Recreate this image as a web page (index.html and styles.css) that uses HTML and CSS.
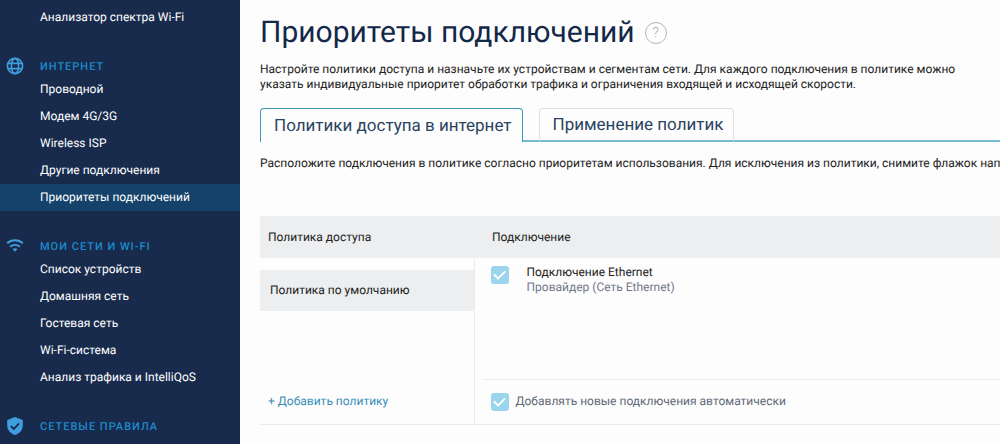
FILE: index.html
```html
<!DOCTYPE html>
<html lang="ru">
<head>
<meta charset="utf-8">
<title>Приоритеты подключений</title>
<link rel="stylesheet" href="styles.css">
</head>
<body>
<div class="app">
  <nav class="sidebar">
    <ul class="menu">
      <li><a class="menu-link" href="#">Анализатор спектра Wi-Fi</a></li>
    </ul>
    <section class="group">
      <h2 class="group-title">
        <svg class="group-icon" viewBox="0 0 18 18" fill="none" stroke="currentColor" stroke-width="1.6">
          <circle cx="9" cy="9" r="7.6"/>
          <ellipse cx="9" cy="9" rx="3.6" ry="7.6"/>
          <path d="M2 6.4h14M2 11.6h14"/>
        </svg>
        Интернет
      </h2>
      <ul class="menu">
        <li><a class="menu-link" href="#">Проводной</a></li>
        <li><a class="menu-link" href="#">Модем 4G/3G</a></li>
        <li><a class="menu-link" href="#">Wireless ISP</a></li>
        <li><a class="menu-link" href="#">Другие подключения</a></li>
        <li><a class="menu-link active" href="#" aria-current="page">Приоритеты подключений</a></li>
      </ul>
    </section>
    <section class="group">
      <h2 class="group-title">
        <svg class="group-icon" viewBox="0 0 18 18" fill="none" stroke="currentColor" stroke-width="1.9">
          <path d="M1.2 6.3c4.4-4 11.2-4 15.6 0M4.2 9.7c2.7-2.5 6.9-2.5 9.6 0"/>
          <path d="M6.5 12.1c1.5-1.2 3.5-1.2 5 0L9 14.8z" fill="currentColor" stroke="none"/>
        </svg>
        Мои сети и Wi-Fi
      </h2>
      <ul class="menu">
        <li><a class="menu-link" href="#">Список устройств</a></li>
        <li><a class="menu-link" href="#">Домашняя сеть</a></li>
        <li><a class="menu-link" href="#">Гостевая сеть</a></li>
        <li><a class="menu-link" href="#">Wi-Fi-система</a></li>
        <li><a class="menu-link" href="#">Анализ трафика и IntelliQoS</a></li>
      </ul>
    </section>
    <section class="group">
      <h2 class="group-title">
        <svg class="group-icon" viewBox="0 0 18 18">
          <path fill="currentColor" d="M9 0l7.8 3v5.500c0 4.300-3.200 8.300-7.800 9.500-4.600-1.200-7.800-5.200-7.800-9.500V3z"/>
          <path class="shield-tick" d="M4.900 9l2.900 2.900 5.400-5.500"/>
        </svg>
        Сетевые правила
      </h2>
    </section>
  </nav>

  <main class="content">
    <header class="page-head">
      <h1 class="page-title">Приоритеты подключений</h1>
      <button class="help" type="button" aria-label="Справка">?</button>
    </header>
    <p class="intro">Настройте политики доступа и назначьте их устройствам и сегментам сети. Для каждого подключения в политике можно указать индивидуальные приоритет обработки трафика и ограничения входящей и исходящей скорости.</p>

    <div class="tabs" role="tablist">
      <button class="tab selected" type="button" role="tab" aria-selected="true">Политики доступа в интернет</button>
      <span class="tab-gap"></span>
      <button class="tab" type="button" role="tab" aria-selected="false">Применение политик</button>
      <span class="tab-rest"></span>
    </div>

    <p class="hint">Расположите подключения в политике согласно приоритетам использования. Для исключения из политики, снимите флажок напротив</p>

    <table class="policies">
      <colgroup><col class="col-policy"><col></colgroup>
      <thead>
        <tr><th scope="col">Политика доступа</th><th scope="col" class="head-conn">Подключение</th></tr>
      </thead>
      <tbody>
        <tr class="row-main">
          <td class="cell-policy"><button class="policy" type="button">Политика по умолчанию</button></td>
          <td class="cell-conn">
            <label class="conn">
              <input class="check" type="checkbox" checked>
              <span class="conn-text">Подключение Ethernet<span class="conn-sub">Провайдер (Сеть Ethernet)</span></span>
            </label>
          </td>
        </tr>
        <tr class="row-foot">
          <td class="cell-policy"><a class="add" href="#">+ Добавить политику</a></td>
          <td class="cell-conn">
            <label class="auto">
              <input class="check" type="checkbox" checked>
              <span>Добавлять новые подключения автоматически</span>
            </label>
          </td>
        </tr>
      </tbody>
    </table>
  </main>
</div>
</body>
</html>
```
FILE: styles.css
```css
* { box-sizing: border-box; }
body {
  margin: 0;
  background: #fdfdfd;
  color: #222;
  font: 12px/15px Roboto, "Liberation Sans", sans-serif;
  text-rendering: geometricPrecision;
}
button { font: inherit; color: inherit; text-rendering: inherit; }
.app { display: flex; min-height: 100vh; }

.sidebar {
  flex: 0 0 240px;
  padding-top: 4px;
  background: #182b4c;
}
.menu { margin: 0; padding: 0; list-style: none; }
.menu-link {
  display: block;
  padding-left: 40px;
  color: #fff;
  line-height: 27px;
  text-decoration: none;
}
.menu-link.active { background: #14426a; }
.group { padding-top: 25px; }
.group-title {
  display: flex;
  align-items: center;
  gap: 16px;
  height: 20px;
  margin: 0;
  padding-left: 6px;
  color: #1c8acb;
  font-size: 11px;
  font-weight: 500;
  letter-spacing: 1px;
  text-transform: uppercase;
}
.group-icon { flex: none; width: 18px; height: 18px; color: #3f9fdc; }
.shield-tick { fill: none; stroke: #182b4c; stroke-width: 1.8; }

.content { flex: 1; min-width: 0; padding: 14px 0 0 20px; overflow: hidden; }
.page-head { display: flex; align-items: center; gap: 10px; }
.page-title {
  margin: 0;
  color: #14284a;
  font-size: 30px;
  font-weight: 400;
  line-height: 38px;
}
.help {
  width: 22px;
  height: 22px;
  padding: 0;
  border: 1px solid #b5b5b5;
  border-radius: 50%;
  background: none;
  color: #a8a8a8;
  font-size: 14px;
  font-weight: 300;
  line-height: 20px;
}
.intro { max-width: 710px; margin: 10px 0 0; }

.tabs {
  display: flex;
  height: 34px;
  margin-top: 16px;
}
.tab {
  padding: 0 10px 0 13px;
  border: 1px solid #dde1e4;
  border-bottom: 2px solid #74bad2;
  border-radius: 4px 4px 0 0;
  background: none;
  color: #2b4361;
  font-size: 17px;
  line-height: 20px;
}
.tab.selected { border-color: #3f97b4; border-bottom: 0; }
.tab-gap, .tab-rest { border-bottom: 2px solid #74bad2; }
.tab-gap { width: 16px; }
.tab-rest { flex: 1; }

.hint { margin: 14px 0 0; white-space: nowrap; }

.policies {
  width: 100%;
  margin-top: 45px;
  border-collapse: collapse;
  table-layout: fixed;
}
.policies th {
  height: 42px;
  padding: 0 8px;
  background: #eceeef;
  font-weight: 400;
  text-align: left;
}
.policies .head-conn { padding-left: 18px; }
.policies td { padding: 0; vertical-align: top; }
.col-policy { width: 214px; }
.row-main { height: 121px; }
.row-foot { height: 45px; border-bottom: 1px solid #e9ebec; }
.cell-policy { border-right: 1px solid #e9ebec; }
.policy {
  display: block;
  width: 100%;
  height: 41px;
  margin-top: 12px;
  padding: 0 10px;
  border: 0;
  background: #eceeef;
  text-align: left;
}
.conn { display: flex; gap: 18px; padding: 7px 0 0 16px; }
.conn-sub { display: block; color: #73798a; }
.check {
  display: grid;
  flex: none;
  place-items: center;
  width: 18px;
  height: 18px;
  margin: 1px 0 0;
  border-radius: 3px;
  background: #9bd5ed;
  appearance: none;
}
.check::before {
  content: "";
  width: 9px;
  height: 5px;
  margin-top: -3px;
  border: solid #fff;
  border-width: 0 0 2px 2px;
  transform: rotate(-45deg);
}
.auto {
  display: flex;
  align-items: center;
  gap: 7px;
  height: 43px;
  margin-left: 8px;
  padding-left: 8px;
  border-top: 1px solid #e9ebec;
  color: #626978;
}
.add {
  display: block;
  padding-left: 8px;
  color: #3a8db8;
  line-height: 44px;
  text-decoration: none;
}
```
